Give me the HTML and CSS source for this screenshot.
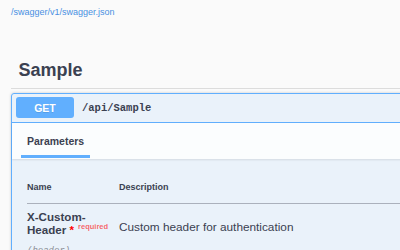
FILE: index.html
```html
<!DOCTYPE html>
<html lang="en">
<head>
<meta charset="utf-8">
<title>Swagger UI</title>
<link rel="stylesheet" href="styles.css">
</head>
<body>
<div class="page">
  <div class="info">
    <h2 class="title">Custom Header Sample</h2>
    <a class="url" href="#">/swagger/v1/swagger.json</a>
  </div>
  <div class="tag-section">
    <h3 class="tag">Sample</h3>
    <div class="opblock">
      <div class="summary">
        <span class="method">GET</span>
        <span class="path">/api/Sample</span>
      </div>
      <div class="section-header">
        <div class="tab">Parameters</div>
      </div>
      <div class="table-container">
        <table class="params">
          <thead>
            <tr><td class="col-name">Name</td><td>Description</td></tr>
          </thead>
          <tbody>
            <tr>
              <td class="col-name">
                <div class="param-name required">X-Custom-Header<span>&nbsp;*</span></div>
                <div class="param-in">(header)</div>
              </td>
              <td class="col-desc"><div class="desc">Custom header for authentication</div></td>
            </tr>
          </tbody>
        </table>
      </div>
    </div>
  </div>
</div>
</body>
</html>
```

FILE: styles.css
```css
html, body {
  margin: 0;
  padding: 0;
  background: #fafafa;
  overflow: hidden;
}
body {
  font-family: "Liberation Sans", Arial, sans-serif;
  color: #3b4151;
}
.page {
  width: 760px;
  padding-left: 11px;
}
.info {
  margin-top: -31px;
}
.title {
  margin: 0;
  font-size: 27px;
  line-height: 31px;
  font-weight: bold;
  color: #3b4151;
}
.url {
  display: block;
  margin-top: 6.7px;
  font-size: 9px;
  line-height: 10.35px;
  color: #4990e2;
  text-decoration: none;
}
.tag-section {
  margin-top: 43px;
}
.tag {
  margin: 0 0 4px;
  padding: 0 0 7.5px 7.5px;
  font-size: 18px;
  line-height: 20.7px;
  font-weight: bold;
  border-bottom: 1px solid #dcdcdc;
}
.opblock {
  border: 1px solid #61affe;
  border-radius: 3px;
  background: rgba(97, 175, 254, 0.1);
  box-shadow: 0 0 3px rgba(0, 0, 0, 0.19);
}
.summary {
  display: flex;
  align-items: center;
  padding: 3px 4px 4px;
  border-bottom: 1px solid #61affe;
}
.method {
  display: flex;
  align-items: center;
  justify-content: center;
  width: 58px;
  height: 21px;
  border-radius: 3px;
  background: #61affe;
  color: #fff;
  font-size: 10.5px;
  font-weight: bold;
  text-shadow: 0 1px 0 rgba(0, 0, 0, 0.1);
}
.path {
  margin-left: 8px;
  font-family: "Liberation Mono", "DejaVu Sans Mono", monospace;
  font-size: 10.5px;
  font-weight: bold;
  color: #3b4151;
}
.section-header {
  display: flex;
  align-items: center;
  height: 36px;
  padding: 0 15px;
  background: rgba(255, 255, 255, 0.8);
  box-shadow: 0 1px 2px rgba(0, 0, 0, 0.1);
}
.tab {
  position: relative;
  font-size: 10.5px;
  line-height: 12px;
  font-weight: bold;
}
.tab::after {
  content: "";
  position: absolute;
  left: -10%;
  width: 120%;
  bottom: -10.5px;
  height: 3px;
  background: #61affe;
}
.table-container {
  padding: 14px 15px 0;
}
.params {
  border-collapse: collapse;
  width: 100%;
}
.params thead td {
  padding: 9px 0 10px;
  font-size: 9px;
  line-height: 10.35px;
  font-weight: bold;
  border-bottom: 1px solid rgba(59, 65, 81, 0.2);
}
.params td {
  padding: 0;
  vertical-align: top;
}
.col-name {
  width: 92px;
}
.params tbody td {
  padding-top: 7.3px;
}
.param-name {
  font-size: 11.6px;
  line-height: 12.7px;
  font-weight: bold;
  width: 86px;
}
.param-name span {
  color: red;
}
.param-name.required::after {
  content: "required";
  position: relative;
  top: -4.5px;
  margin-left: 4px;
  font-size: 7.5px;
  color: rgba(255, 0, 0, 0.6);
}
.param-in {
  margin-top: 8px;
  font-family: "Liberation Mono", "DejaVu Sans Mono", monospace;
  font-size: 9px;
  font-style: italic;
  color: #8c8f96;
}
.desc {
  margin-top: 10.3px;
  font-size: 11.8px;
  line-height: 13.6px;
}
```
